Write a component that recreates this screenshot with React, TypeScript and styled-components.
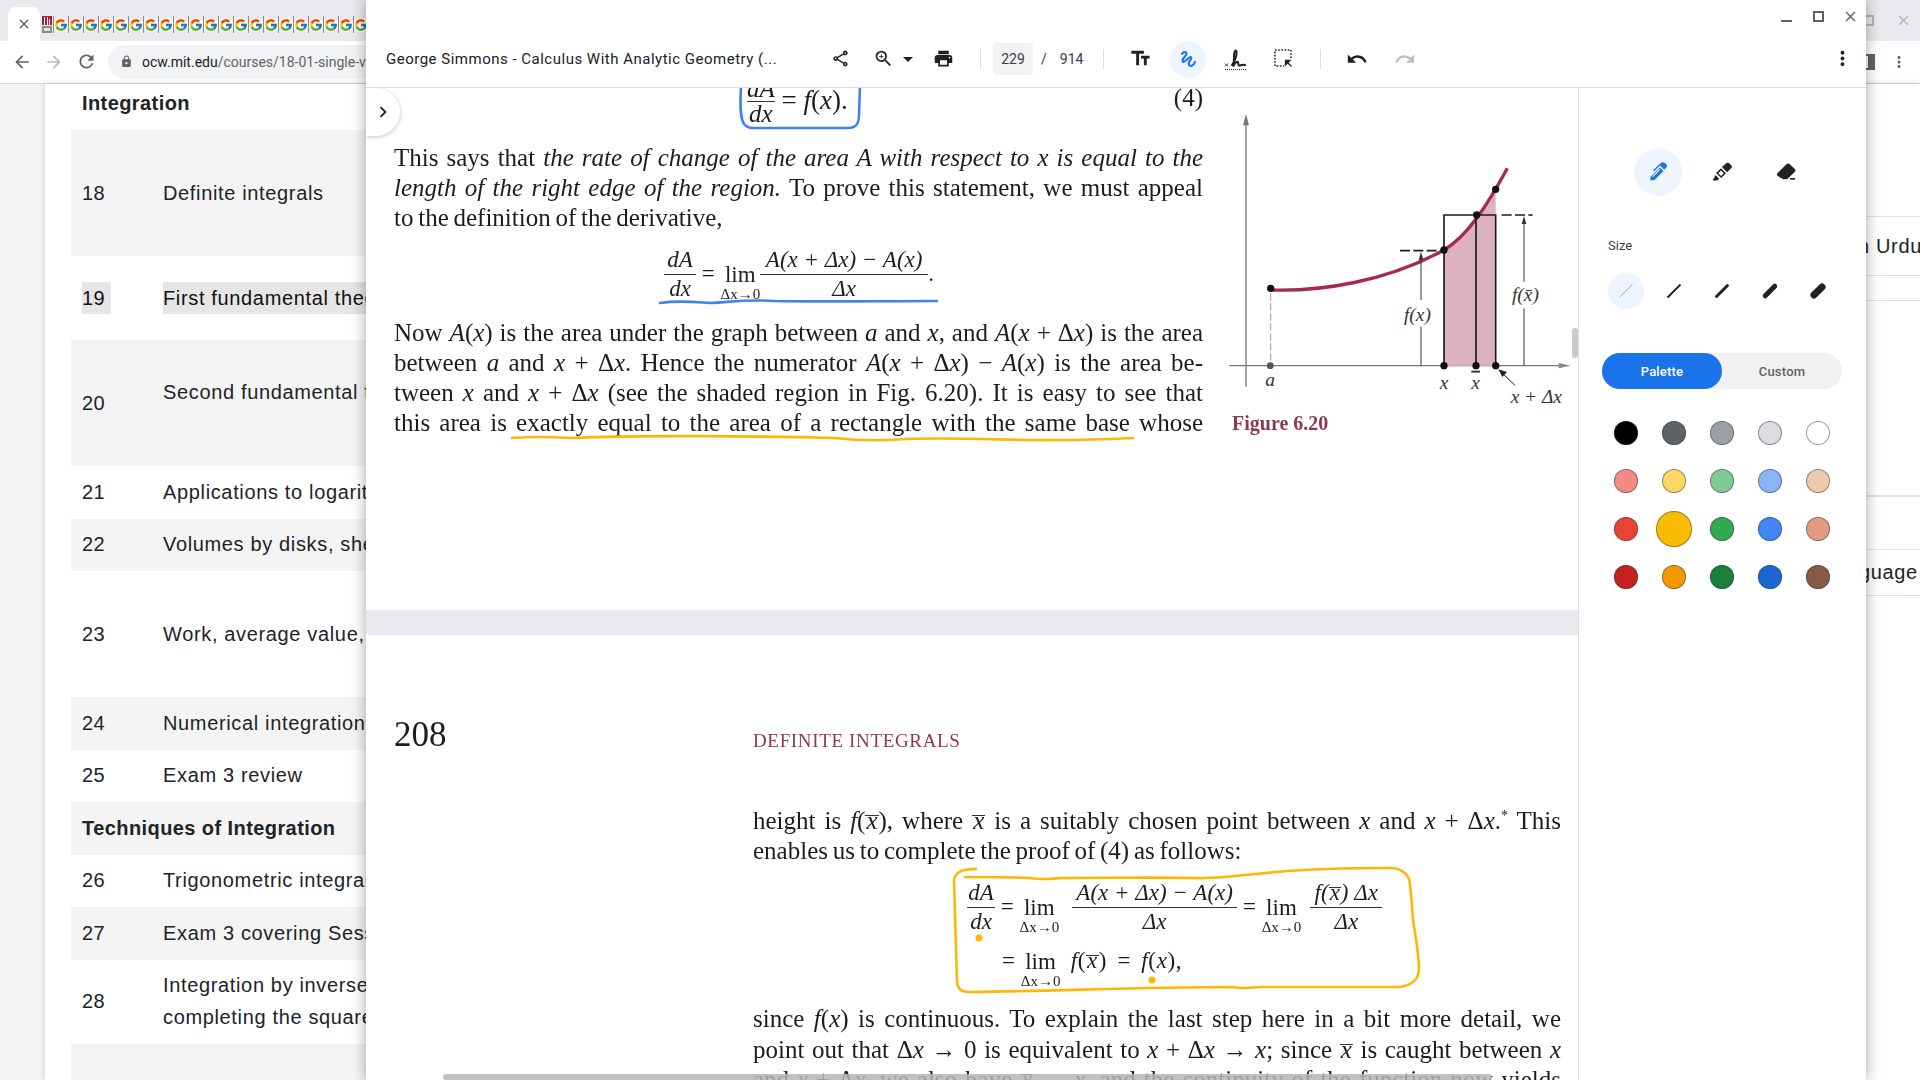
import React from "react";
import styled, { createGlobalStyle } from "styled-components";
import { FcGoogle } from "react-icons/fc";
import {
  MdArrowBack,
  MdArrowForward,
  MdRefresh,
  MdLock,
  MdClose,
  MdMoreVert,
  MdOutlineShare,
  MdOutlineZoomIn,
  MdArrowDropDown,
  MdPrint,
  MdOutlineTextFields,
  MdUndo,
  MdRedo,
  MdChevronRight,
} from "react-icons/md";

const GlobalStyle = createGlobalStyle`
  html, body {
    margin: 0;
    padding: 0;
    height: 100%;
    overflow: hidden;
    background: #fff;
  }
  * { box-sizing: border-box; }
`;

const tabCount = 21;

type TableRow = {
  kind?: string;
  num?: string;
  text: string;
  text2?: string;
  h: number;
  shade?: boolean;
  mark?: boolean;
  lift?: number;
  nudge?: number;
};

const rows: TableRow[] = [
  { kind: "head", text: "Integration", h: 46, nudge: 9 },
  { num: "18", text: "Definite integrals", h: 126, shade: true },
  { num: "19", text: "First fundamental theorem of calculus", h: 84, mark: true },
  { num: "20", text: "Second fundamental theorem", h: 126, shade: true, lift: 22 },
  { num: "21", text: "Applications to logarithms and geometry", h: 53, nudge: 2 },
  { num: "22", text: "Volumes by disks, shells", h: 52, shade: true, nudge: 2 },
  { num: "23", text: "Work, average value, probability", h: 126 },
  { num: "24", text: "Numerical integration", h: 53, shade: true, nudge: 2 },
  { num: "25", text: "Exam 3 review", h: 52, nudge: 2 },
  { kind: "head", text: "Techniques of Integration", h: 53, shade: true, nudge: 2 },
  { num: "26", text: "Trigonometric integrals", h: 52, nudge: 2 },
  { num: "27", text: "Exam 3 covering Sessions", h: 53, shade: true, nudge: 2 },
  { num: "28", text: "Integration by inverse substitution;", text2: "completing the square", h: 84, nudge: 2 },
  { num: "", text: "", h: 60, shade: true },
];

const sizes = [1, 2, 3, 5, 7];

const colors = [
  "#000000", "#5f6368", "#9aa0a6", "#dadce0", "#ffffff",
  "#f28b82", "#fdd663", "#81c995", "#8ab4f8", "#eec9ae",
  "#ea4335", "#fbbc04", "#34a853", "#4285f4", "#e19c80",
  "#c5221f", "#f29900", "#188038", "#1967d2", "#885945",
];

function MitIcon() {
  return (
    <svg width="10" height="17" viewBox="0 0 10 17">
      <rect width="10" height="9" fill="#a31f34" />
      <rect x="2" y="1" width="1" height="8" fill="#fff" />
      <rect x="5" y="1" width="1" height="8" fill="#fff" />
      <rect x="7" y="3" width="1" height="6" fill="#fff" />
      <rect y="10" width="10" height="7" fill="#8d8d86" />
      <rect x="2" y="12" width="6" height="3" fill="#e5e5e0" />
    </svg>
  );
}

function SquiggleIcon() {
  return (
    <svg width="24" height="24" viewBox="0 0 24 24" fill="none">
      <path
        d="M6 7C8 4 12 5 10 8C8 11 5 13 7 15C9 16 13 9 15 10C17 12 11 15 13 18C15 20 18 18 19 15"
        stroke="#1a73e8"
        strokeWidth="2.1"
        strokeLinecap="round"
      />
    </svg>
  );
}

function SignIcon() {
  return (
    <svg width="24" height="24" viewBox="0 0 24 24" fill="none">
      <path d="M1 16.5l3 3M4 16.5l-3 3" stroke="#333" strokeWidth="1" />
      <path
        d="M8 18C11 14 13 8 12.5 5C12 2 10 4 10 9C10 13 9.5 18 9 19.5C11 16 13 14 14 15C14.5 17 14 19 16 18.5C18 18 19 17 21 18"
        stroke="#202124"
        strokeWidth="2"
        strokeLinecap="round"
      />
      <path d="M1 22.5H23" stroke="#202124" strokeWidth="1" strokeDasharray="1 1" />
    </svg>
  );
}

function SelectIcon() {
  return (
    <svg width="24" height="24" viewBox="0 0 24 24" fill="none">
      <rect x="3" y="3" width="16" height="16" stroke="#202124" strokeWidth="1.6" strokeDasharray="1.6 1.6" />
      <rect x="12" y="12" width="9" height="9" fill="#fff" />
      <path d="M19.5 19.5l-3.5-3.5M13.5 18v-4.5H18z" fill="#202124" stroke="#202124" strokeWidth="1.3" />
    </svg>
  );
}

function PenIcon() {
  return (
    <svg width="24" height="24" viewBox="0 0 24 24" fill="#1a73e8">
      <path d="M4 20.5l.8-4L14 7.5l3.5 3.5-9 9z" />
      <path d="M11.5 6L15.5 2.5C17 1.8 20 3 20.8 5.2C21.2 6.2 20.8 7.2 20 8L18.3 9.7L14 5.5L8.2 11.2L7 10.2z" />
      <path d="M6.6 16.6L13.9 9.4" stroke="#fff" strokeWidth="1.1" />
    </svg>
  );
}

function HighlighterIcon() {
  return (
    <svg width="24" height="24" viewBox="0 0 24 24" fill="#202124">
      <path d="M12 7L16.5 3C17.5 2.4 18.5 2.6 19.2 3.2L21.4 5.4C22 6.2 22 7.2 21.4 8L17 12.2z" />
      <path d="M6 13L11 8.2L16 13.2L11.2 18z" />
      <path d="M8.3 13.2L11 10.5L13.8 13.3L11.1 16z" fill="#fff" />
      <path d="M5.5 15L9.2 18.8L7.2 20.6H2.7z" />
    </svg>
  );
}

function EraserIcon() {
  return (
    <svg width="24" height="24" viewBox="0 0 24 24" fill="#202124">
      <path d="M3.4 13.2L12.8 4C13.6 3.2 14.8 3.2 15.5 4L20.8 9C21.6 9.8 21.6 11 20.8 11.8L14.5 18L13 19.2H9.2L3.4 15.8C2.8 15.2 2.8 14 3.4 13.2z" />
      <rect x="16" y="18" width="5" height="1.6" />
    </svg>
  );
}

function SizeStroke({ w, active }: { w: number; active: boolean }) {
  const inset = 3.5 + (w > 2 ? w * 0.35 : 0);
  return (
    <svg width="20" height="20" viewBox="0 0 20 20">
      <path
        d={`M${inset} ${20 - inset}L${20 - inset} ${inset}`}
        stroke={active ? "#8ab4f8" : "#202124"}
        strokeWidth={w}
        strokeLinecap={w > 2 ? "round" : "butt"}
      />
    </svg>
  );
}

function Diagram() {
  return (
    <svg width="360" height="310" viewBox="0 0 1080 930" fill="none">
      <path d="M78 60V860" stroke="#777" strokeWidth="4" />
      <path d="M78 42l-9 34h18z" fill="#777" />
      <path d="M28 797H1030" stroke="#777" strokeWidth="4" />
      <path d="M1052 797l-36-8v16z" fill="#888" />
      <path d="M672 450C735 415 790 345 827 268V797H672z" fill="#dcb2c2" />
      <path d="M152 570C300 575 500 545 672 450C740 410 800 320 862 205" stroke="#a52a50" strokeWidth="10" />
      <path d="M672 797V345H827V797M768 345V797" stroke="#1c1c1c" strokeWidth="5" />
      <path d="M152 580V790" stroke="#666" strokeWidth="2" strokeDasharray="22 8" />
      <path d="M540 452H672M845 345H938" stroke="#1c1c1c" strokeWidth="5" strokeDasharray="30 10" />
      <path d="M603 475V600M603 680V797M912 370V545M912 625V797" stroke="#333" strokeWidth="3" />
      <path d="M603 455l-7 24h14zM912 348l-7 24h14z" fill="#333" />
      <path d="M885 856L845 818" stroke="#222" strokeWidth="3" />
      <path d="M835 808l26 8-14 15z" fill="#222" />
      {[
        [152, 565],
        [672, 450],
        [770, 345],
        [827, 268],
        [672, 797],
        [768, 797],
        [827, 797],
      ].map(([cx, cy]) => (
        <circle key={cx + "-" + cy} cx={cx} cy={cy} r="11" fill="#111" />
      ))}
      <circle cx="151" cy="797" r="10" fill="#555" />
      <DiagramText x="136" y="858">a</DiagramText>
      <DiagramText x="659" y="866">x</DiagramText>
      <DiagramText x="754" y="866" textDecoration="overline">x</DiagramText>
      <DiagramText x="872" y="908">x + Δx</DiagramText>
      <DiagramText x="552" y="662">f(x)</DiagramText>
      <DiagramText x="876" y="604">f(x̄)</DiagramText>
    </svg>
  );
}

function InkLayer() {
  return (
    <InkSvg viewBox="366 88 1212 992" width="1212" height="992" fill="none">
      <g stroke="#3f83ee" strokeWidth="2.6" strokeLinecap="round">
        <path d="M741 86C740 105 740 118 744 124C748 129 752 128 765 128L848 128C856 128 859 124 859 115L860 86" />
        <path d="M660 303C680 300 695 302 710 303C730 302 750 299 775 301C820 302 880 301 937 301" />
      </g>
      <g stroke="#fbb804" strokeWidth="2.6" strokeLinecap="round">
        <path d="M512 438C540 436 555 437 570 438C640 435 760 436 835 438C860 441 880 441 905 439C960 437 1020 441 1060 440C1085 440 1110 439 1133 438" />
        <path d="M976 869C960 869 955 873 954 880L957 982C958 990 962 992 970 992C1060 991 1140 987 1233 987C1240 989 1250 988 1260 987L1400 987C1412 985 1419 980 1419 968C1418 940 1412 925 1412 905L1410 885C1410 875 1402 868 1390 868C1350 868 1310 869 1276 872C1250 874 1220 879 1195 878C1150 877 1100 878 1061 878C1050 879 1040 880 1030 878C1010 877 990 877 965 877" />
      </g>
      <circle cx="979" cy="938" r="3.6" fill="#fbb804" />
      <circle cx="1152" cy="980" r="3.6" fill="#fbb804" />
    </InkSvg>
  );
}

function App() {
  return (
    <Desktop>
      <GlobalStyle />
      <Browser>
        <TabStrip>
          <ActiveTab>
            <MdClose size={16} color="#5f6368" />
          </ActiveTab>
          <FaviconTab $first>
            <MitIcon />
          </FaviconTab>
          {Array.from({ length: tabCount }).map((_, i) => (
            <FaviconTab key={i}>
              <GoogleDisc>
                <FcGoogle size={14} />
              </GoogleDisc>
            </FaviconTab>
          ))}
          <TabSpacer />
          <GhostSquare />
          <GhostClose>
            <MdClose size={17} color="#b4b6b9" />
          </GhostClose>
        </TabStrip>
        <NavBar>
          <NavButton>
            <MdArrowBack size={20} color="#5f6368" />
          </NavButton>
          <NavButton>
            <MdArrowForward size={20} color="#b7b9bc" />
          </NavButton>
          <NavButton>
            <MdRefresh size={21} color="#5f6368" />
          </NavButton>
          <Omnibox>
            <MdLock size={13} color="#5f6368" />
            <UrlHost>ocw.mit.edu</UrlHost>
            <UrlPath>/courses/18-01-single-v</UrlPath>
          </Omnibox>
          <NavRight>
            <SidebarStub />
            <MdMoreVert size={18} color="#5f6368" />
          </NavRight>
        </NavBar>
        <Site>
          <Gutter />
          <Sheet>
            <SheetTable>
              {rows.map((r, i) => (
                <Row key={i} $h={r.h} $shade={!!r.shade} $nudge={r.nudge || 0}>
                  {r.kind === "head" ? (
                    <RowHead>{r.text}</RowHead>
                  ) : (
                    <>
                      <RowNum>
                        <Mark $on={!!r.mark}>{r.num}</Mark>
                      </RowNum>
                      <RowText $lift={r.lift || 0}>
                        <Mark $on={!!r.mark}>{r.text}</Mark>
                        {r.text2 && <div>{r.text2}</div>}
                      </RowText>
                    </>
                  )}
                </Row>
              ))}
            </SheetTable>
            <SheetEdge>
              <EdgeRow $h={133} />
              <EdgeRow $h={59}>
                <EdgeText $shift={-8}>n Urdu</EdgeText>
              </EdgeRow>
              <EdgeRow $h={25} />
              <EdgeRow $h={196} $thick />
              <EdgeRow $h={53} />
              <EdgeRow $h={46}>
                <EdgeText $shift={-7}>guage</EdgeText>
              </EdgeRow>
            </SheetEdge>
          </Sheet>
        </Site>
      </Browser>

      <ViewerWindow>
        <ViewerHead>
          <WindowControls>
            <MinimizeGlyph />
            <MaximizeGlyph />
            <WindowClose>
              <MdClose size={17} color="#5f6368" />
            </WindowClose>
          </WindowControls>
          <ViewerToolbar>
            <DocTitle>George Simmons - Calculus With Analytic Geometry (...</DocTitle>
            <ToolButton>
              <MdOutlineShare size={19} color="#202124" />
            </ToolButton>
            <ToolButton $w={38}>
              <MdOutlineZoomIn size={21} color="#202124" />
            </ToolButton>
            <ToolButton $w={12}>
              <MdArrowDropDown size={24} color="#202124" style={{ flexShrink: 0 }} />
            </ToolButton>
            <ToolButton $ml={5}>
              <MdPrint size={21} color="#202124" />
            </ToolButton>
            <ToolDivider $ml={13} />
            <PageBox>229</PageBox>
            <PageSlash>/</PageSlash>
            <PageTotal>914</PageTotal>
            <ToolDivider $ml={20} />
            <ToolButton $ml={12}>
              <MdOutlineTextFields size={23} color="#202124" />
            </ToolButton>
            <ToolButton $active>
              <SquiggleIcon />
            </ToolButton>
            <ToolButton>
              <SignIcon />
            </ToolButton>
            <ToolButton $ml={0}>
              <SelectIcon />
            </ToolButton>
            <ToolDivider $ml={12} />
            <ToolButton $ml={12}>
              <MdUndo size={22} color="#202124" />
            </ToolButton>
            <ToolButton $ml={0}>
              <MdRedo size={22} color="#bdc1c6" />
            </ToolButton>
            <ToolbarSpacer />
            <MdMoreVert size={23} color="#202124" />
          </ViewerToolbar>
        </ViewerHead>

        <ViewerBody>
          <DocArea>
            <UpperPage>
              <TextColumn>
                <TopEquation>
                  <Equation>
                    <Frac>
                      <Num>dA</Num>
                      <Den>dx</Den>
                    </Frac>
                    <TopEquationText>
                      &nbsp;= <i>f</i>(<i>x</i>).
                    </TopEquationText>
                  </Equation>
                  <EquationTag>(4)</EquationTag>
                </TopEquation>
                <Paragraph>
                  <Line>
                    This says that <i>the rate of change of the area A with respect to x is equal to the</i>
                  </Line>
                  <Line>
                    <i>length of the right edge of the region.</i> To prove this statement, we must appeal
                  </Line>
                  <LastLine>to the definition of the derivative,</LastLine>
                </Paragraph>
                <CenteredEquation>
                  <Frac $wide={32}>
                    <Num>dA</Num>
                    <Den>dx</Den>
                  </Frac>
                  <MathText>&nbsp;=&nbsp;</MathText>
                  <Lim>
                    <LimWord>lim</LimWord>
                    <LimSub>Δx→0</LimSub>
                  </Lim>
                  <Frac $wide={168}>
                    <Num>
                      <i>A</i>(<i>x</i> + Δ<i>x</i>) − <i>A</i>(<i>x</i>)
                    </Num>
                    <Den>
                      Δ<i>x</i>
                    </Den>
                  </Frac>
                  <MathText>.</MathText>
                </CenteredEquation>
                <SecondParagraph>
                  <Line>
                    Now <i>A</i>(<i>x</i>) is the area under the graph between <i>a</i> and <i>x</i>, and <i>A</i>(<i>x</i> + Δ<i>x</i>) is the area
                  </Line>
                  <Line>
                    between <i>a</i> and <i>x</i> + Δ<i>x</i>. Hence the numerator <i>A</i>(<i>x</i> + Δ<i>x</i>) − <i>A</i>(<i>x</i>) is the area be-
                  </Line>
                  <Line>
                    tween <i>x</i> and <i>x</i> + Δ<i>x</i> (see the shaded region in Fig. 6.20). It is easy to see that
                  </Line>
                  <Line>this area is exactly equal to the area of a rectangle with the same base whose</Line>
                </SecondParagraph>
              </TextColumn>
              <FigureColumn>
                <Diagram />
                <FigureCaption>Figure 6.20</FigureCaption>
              </FigureColumn>
            </UpperPage>
            <PageGap />
            <LowerPage>
              <PageNumber>208</PageNumber>
              <LowerColumn>
                <RunningHead>DEFINITE INTEGRALS</RunningHead>
                <LeadParagraph>
                  <Line>
                    height is <i>f</i>(<Bar>x</Bar>), where <Bar>x</Bar> is a suitably chosen point between <i>x</i> and <i>x</i> + Δ<i>x</i>.<Sup>*</Sup> This
                  </Line>
                  <LastLine>enables us to complete the proof of (4) as follows:</LastLine>
                </LeadParagraph>
                <ProofBlock>
                  <ProofRow>
                    <Frac $wide={28}>
                      <Num>dA</Num>
                      <Den>dx</Den>
                    </Frac>
                    <MathText>&nbsp;=&nbsp;</MathText>
                    <Lim>
                      <LimWord>lim</LimWord>
                      <LimSub>Δx→0</LimSub>
                    </Lim>
                    <Frac $ml={13} $wide={165}>
                      <Num>
                        <i>A</i>(<i>x</i> + Δ<i>x</i>) − <i>A</i>(<i>x</i>)
                      </Num>
                      <Den>
                        Δ<i>x</i>
                      </Den>
                    </Frac>
                    <MathText>&nbsp;=&nbsp;</MathText>
                    <Lim>
                      <LimWord>lim</LimWord>
                      <LimSub>Δx→0</LimSub>
                    </Lim>
                    <Frac $ml={9} $wide={72}>
                      <Num>
                        <i>f</i>(<Bar>x</Bar>) Δ<i>x</i>
                      </Num>
                      <Den>
                        Δ<i>x</i>
                      </Den>
                    </Frac>
                  </ProofRow>
                  <ProofRowIndented>
                    <MathText>=&nbsp;</MathText>
                    <Lim>
                      <LimWord>lim</LimWord>
                      <LimSub>Δx→0</LimSub>
                    </Lim>
                    <WideMathText>
                      &nbsp;<i>f</i>(<Bar>x</Bar>) = <i>f</i>(<i>x</i>),
                    </WideMathText>
                  </ProofRowIndented>
                </ProofBlock>
                <Paragraph>
                  <Line>
                    since <i>f</i>(<i>x</i>) is continuous. To explain the last step here in a bit more detail, we
                  </Line>
                  <Line>
                    point out that Δ<i>x</i> → 0 is equivalent to <i>x</i> + Δ<i>x</i> → <i>x</i>; since <Bar>x</Bar> is caught between <i>x</i>
                  </Line>
                  <Line>
                    and <i>x</i> + Δ<i>x</i>, we also have <Bar>x</Bar> → <i>x</i>, and the continuity of the function now yields
                  </Line>
                </Paragraph>
              </LowerColumn>
            </LowerPage>
            <InkLayer />
            <DrawerButton>
              <MdChevronRight size={22} color="#202124" />
            </DrawerButton>
            <VerticalThumb />
            <HorizontalThumb />
          </DocArea>

          <SidePanel>
            <PenTools>
              <PenTool $active>
                <PenIcon />
              </PenTool>
              <PenTool>
                <HighlighterIcon />
              </PenTool>
              <PenTool>
                <EraserIcon />
              </PenTool>
            </PenTools>
            <SizeLabel>Size</SizeLabel>
            <SizeRow>
              {sizes.map((w, i) => (
                <SizeButton key={w} $active={i === 0}>
                  <SizeStroke w={w} active={i === 0} />
                </SizeButton>
              ))}
            </SizeRow>
            <Toggle>
              <ToggleOn>Palette</ToggleOn>
              <ToggleOff>Custom</ToggleOff>
            </Toggle>
            <Swatches>
              {colors.map((c) => (
                <SwatchCell key={c}>
                  <Swatch $color={c} $selected={c === "#fbbc04"} />
                </SwatchCell>
              ))}
            </Swatches>
          </SidePanel>
        </ViewerBody>
      </ViewerWindow>
    </Desktop>
  );
}

export default App;

const Desktop = styled.div`
  position: relative;
  width: 1920px;
  height: 1080px;
  overflow: hidden;
`;

const DiagramText = styled.text`
  font-family: "Liberation Serif", serif;
  font-style: italic;
  font-size: 58px;
  fill: #333;
`;

const InkSvg = styled.svg`
  position: absolute;
  left: 0;
  top: 0;
  pointer-events: none;
`;

const Browser = styled.div`
  width: 1920px;
  height: 1080px;
  display: flex;
  flex-direction: column;
  font-family: "Liberation Sans", Arial, sans-serif;
`;

const TabStrip = styled.div`
  height: 41px;
  background: #e8eaed;
  display: flex;
  align-items: flex-end;
  padding-left: 8px;
`;

const ActiveTab = styled.div`
  width: 32px;
  height: 34px;
  background: #fff;
  border-radius: 8px 8px 0 0;
  display: flex;
  align-items: center;
  justify-content: center;
`;

const FaviconTab = styled.div<{ $first?: boolean }>`
  width: ${(p) => (p.$first ? "14px" : "15px")};
  height: 17px;
  margin-bottom: 8px;
  display: flex;
  align-items: center;
  justify-content: center;
  border-right: 1px solid #8a8d91;
`;

const GoogleDisc = styled.div`
  width: 14px;
  height: 14px;
  border-radius: 50%;
  background: #fff;
  display: flex;
  align-items: center;
  justify-content: center;
`;

const TabSpacer = styled.div`
  flex: 1;
`;

const GhostSquare = styled.div`
  width: 11px;
  height: 11px;
  border: 2px solid #b4b6b9;
  margin: 0 21px 15px 0;
`;

const GhostClose = styled.div`
  width: 17px;
  height: 17px;
  margin: 0 8px 12px 0;
`;

const NavBar = styled.div`
  height: 43px;
  background: #fff;
  border-bottom: 1px solid #dadce0;
  display: flex;
  align-items: center;
  padding: 0 12px 1px 6px;
`;

const NavButton = styled.div`
  width: 32px;
  height: 32px;
  display: flex;
  align-items: center;
  justify-content: center;
`;

const Omnibox = styled.div`
  width: 270px;
  height: 34px;
  margin-left: 6px;
  padding-left: 12px;
  border-radius: 17px 0 0 17px;
  background: #f1f3f4;
  display: flex;
  align-items: center;
  overflow: hidden;
  white-space: nowrap;
  font-family: Roboto, sans-serif;
  font-size: 14px;
`;

const UrlHost = styled.span`
  margin-left: 9px;
  color: #202124;
`;

const UrlPath = styled.span`
  color: #5f6368;
`;

const NavRight = styled.div`
  margin-left: auto;
  display: flex;
  align-items: center;
  gap: 15px;
`;

const SidebarStub = styled.div`
  width: 16px;
  height: 16px;
  border: 2px solid #5f6368;
  border-right-width: 7px;
`;

const Site = styled.div`
  flex: 1;
  display: flex;
  background: #f4f4f4;
  min-height: 0;
`;

const Gutter = styled.div`
  width: 45px;
  flex-shrink: 0;
`;

const Sheet = styled.div`
  flex: 1;
  background: #fff;
  box-shadow: 0 0 6px rgba(0, 0, 0, 0.18);
  display: flex;
  justify-content: space-between;
  overflow: hidden;
`;

const SheetTable = styled.div`
  width: 295px;
  margin-left: 26px;
  flex-shrink: 0;
  overflow: hidden;
`;

const Row = styled.div<{ $h: number; $shade: boolean; $nudge: number }>`
  height: ${(p) => p.$h}px;
  padding: 0 0 ${(p) => p.$nudge}px 11px;
  background: ${(p) => (p.$shade ? "#f4f4f4" : "#fff")};
  display: flex;
  align-items: center;
  font-size: 20px;
  line-height: 32px;
  letter-spacing: 0.65px;
  color: #212326;
  white-space: nowrap;
`;

const RowHead = styled.div`
  font-weight: 700;
  letter-spacing: 0.42px;
`;

const RowNum = styled.div`
  width: 81px;
  flex-shrink: 0;
  letter-spacing: 0.4px;
`;

const RowText = styled.div<{ $lift: number }>`
  margin-bottom: ${(p) => p.$lift}px;
`;

const Mark = styled.span<{ $on: boolean }>`
  display: inline-block;
  background: ${(p) => (p.$on ? "#e6e6e6" : "transparent")};
  color: ${(p) => (p.$on ? "#111" : "inherit")};
  padding-right: ${(p) => (p.$on ? "6px" : "0")};
`;

const SheetEdge = styled.div`
  width: 54px;
  flex-shrink: 0;
  display: flex;
  flex-direction: column;
  overflow: hidden;
`;

const EdgeRow = styled.div<{ $h: number; $thick?: boolean }>`
  height: ${(p) => p.$h}px;
  flex-shrink: 0;
  display: flex;
  align-items: center;
  justify-content: flex-start;
  border-bottom: ${(p) => (p.$thick ? "2px" : "1px")} solid #dfe0e2;
`;

const EdgeText = styled.span<{ $shift: number }>`
  margin-left: ${(p) => p.$shift}px;
  font-size: 20px;
  color: #212326;
  letter-spacing: 0.65px;
  white-space: nowrap;
`;

const ViewerWindow = styled.div`
  position: absolute;
  left: 366px;
  top: 0;
  width: 1500px;
  height: 1080px;
  background: #fff;
  box-shadow: 0 0 14px rgba(0, 0, 0, 0.35);
  display: flex;
  flex-direction: column;
  font-family: Roboto, sans-serif;
  color: #202124;
`;

const ViewerHead = styled.div`
  height: 88px;
  flex-shrink: 0;
  border-bottom: 1px solid #dadce0;
`;

const WindowControls = styled.div`
  height: 32px;
  display: flex;
  align-items: center;
  justify-content: flex-end;
  padding-right: 7px;
`;

const MinimizeGlyph = styled.div`
  width: 11px;
  height: 2px;
  background: #5f6368;
  margin: 9px 21px 0 0;
`;

const MaximizeGlyph = styled.div`
  width: 11px;
  height: 11px;
  border: 2px solid #5f6368;
  margin-right: 18px;
`;

const WindowClose = styled.div`
  display: flex;
  width: 17px;
  height: 17px;
`;

const ViewerToolbar = styled.div`
  height: 53px;
  display: flex;
  align-items: center;
  padding: 0 12px 0 20px;
`;

const DocTitle = styled.div`
  width: 430px;
  flex-shrink: 0;
  font-size: 15px;
  white-space: nowrap;
  letter-spacing: 0.5px;
`;

const ToolButton = styled.div<{ $w?: number; $ml?: number; $active?: boolean }>`
  width: ${(p) => (p.$active ? 36 : p.$w ?? 48)}px;
  height: 36px;
  margin-left: ${(p) => (p.$active ? 6 : p.$ml ?? 0)}px;
  margin-right: ${(p) => (p.$active ? 6 : 0)}px;
  border-radius: 50%;
  background: ${(p) => (p.$active ? "#eff5fe" : "transparent")};
  display: flex;
  align-items: center;
  justify-content: center;
  flex-shrink: 0;
`;

const ToolDivider = styled.div<{ $ml: number }>`
  width: 1px;
  height: 20px;
  background: #dadce0;
  margin-left: ${(p) => p.$ml}px;
  flex-shrink: 0;
`;

const PageBox = styled.div`
  width: 40px;
  height: 32px;
  margin-left: 12px;
  border-radius: 4px;
  background: #f1f3f4;
  display: flex;
  align-items: center;
  justify-content: center;
  font-size: 14px;
  color: #3c4043;
`;

const PageSlash = styled.div`
  margin-left: 8px;
  font-size: 14px;
  color: #3c4043;
`;

const PageTotal = styled.div`
  margin-left: 13px;
  font-size: 14px;
  color: #3c4043;
`;

const ToolbarSpacer = styled.div`
  flex: 1;
`;

const ViewerBody = styled.div`
  flex: 1;
  display: flex;
  min-height: 0;
`;

const DocArea = styled.div`
  position: relative;
  flex: 1;
  min-width: 0;
  overflow: hidden;
  background: #fff;
  font-family: "Liberation Serif", "Times New Roman", serif;
  color: #1c1c1c;
  font-size: 25px;
  line-height: 30.2px;
`;

const UpperPage = styled.div`
  height: 522px;
  padding-left: 28px;
  display: flex;
  gap: 17px;
`;

const TextColumn = styled.div`
  width: 809px;
  flex-shrink: 0;
  filter: blur(0.3px);
`;

const TopEquation = styled.div`
  height: 41px;
  padding-left: 353px;
  display: flex;
  justify-content: space-between;
`;

const EquationTag = styled.span`
  margin-top: -5px;
`;

const Equation = styled.div`
  display: flex;
  align-items: center;
  height: 42px;
  margin-top: -8px;
  line-height: 22px;
`;

const Paragraph = styled.div`
  margin-top: 14px;
  word-spacing: -1.5px;
`;

const SecondParagraph = styled(Paragraph)`
  margin-top: 16px;
`;

const LeadParagraph = styled(Paragraph)`
  margin-top: 52px;
`;

const Line = styled.div`
  white-space: nowrap;
  text-align: justify;
  text-align-last: justify;
`;

const LastLine = styled.div`
  white-space: nowrap;
`;

const CenteredEquation = styled.div`
  margin-top: 13px;
  height: 55px;
  padding-left: 270px;
  display: flex;
  align-items: center;
  font-size: 23px;
  line-height: 26px;
`;

const Frac = styled.div<{ $wide?: number; $ml?: number }>`
  display: flex;
  flex-direction: column;
  align-items: center;
  flex-shrink: 0;
  width: ${(p) => (p.$wide ? p.$wide + "px" : "auto")};
  margin-left: ${(p) => p.$ml ?? 0}px;
`;

const Num = styled.div`
  width: 100%;
  text-align: center;
  font-style: italic;
  white-space: nowrap;
  padding-bottom: 1px;
  border-bottom: 1.5px solid #333;

  i {
    font-style: italic;
  }
`;

const Den = styled.div`
  padding-top: 1px;
  font-style: italic;
  white-space: nowrap;
`;

const MathText = styled.span`
  white-space: pre;
`;

const TopEquationText = styled(MathText)`
  margin-top: -3px;
  font-size: 27px;
`;

const WideMathText = styled(MathText)`
  word-spacing: 4px;
  letter-spacing: 0.6px;
`;

const Lim = styled.div`
  display: flex;
  flex-direction: column;
  align-items: center;
  padding-top: 17px;
  flex-shrink: 0;
`;

const LimWord = styled.div`
  line-height: 22px;
`;

const LimSub = styled.div`
  font-size: 15px;
  line-height: 15px;
  margin-top: 1px;
  white-space: nowrap;
`;

const FigureColumn = styled.div`
  padding-top: 12px;
  width: 358px;
  flex-shrink: 0;
`;

const FigureCaption = styled.div`
  margin-left: 12px;
  margin-top: -7px;
  font-size: 20px;
  line-height: 26px;
  font-weight: 700;
  color: #8b3a54;
  filter: blur(0.3px);
`;

const PageGap = styled.div`
  height: 25px;
  background: #e8eaed;
`;

const LowerPage = styled.div`
  padding-left: 28px;
  display: flex;
`;

const PageNumber = styled.div`
  width: 359px;
  flex-shrink: 0;
  padding-top: 82px;
  font-size: 35px;
  line-height: 36px;
  filter: blur(0.3px);
`;

const LowerColumn = styled.div`
  width: 808px;
  flex-shrink: 0;
  filter: blur(0.3px);
`;

const RunningHead = styled.div`
  margin-top: 93px;
  font-size: 19px;
  line-height: 26px;
  letter-spacing: 0.65px;
  color: #8b3a54;
`;

const Sup = styled.sup`
  font-size: 14px;
  line-height: 0;
`;

const Bar = styled.i`
  display: inline-block;
  line-height: 0.42em;
  padding: 0 1px;
  border-top: 1.5px solid #333;
`;

const ProofBlock = styled.div`
  margin-top: 13px;
  padding-left: 214px;
  height: 111px;
  font-size: 23px;
  line-height: 26px;
`;

const ProofRow = styled.div`
  display: flex;
  align-items: center;
  height: 56px;
`;

const ProofRowIndented = styled(ProofRow)`
  height: 46px;
  margin-top: 3px;
  padding-left: 35px;
`;

const DrawerButton = styled.div`
  position: absolute;
  left: 0;
  top: 0;
  width: 34px;
  height: 48px;
  background: #fff;
  border-radius: 0 24px 24px 0;
  box-shadow: 0 1px 4px rgba(0, 0, 0, 0.25);
  display: flex;
  align-items: center;
  justify-content: center;
`;

const VerticalThumb = styled.div`
  position: absolute;
  right: 0;
  top: 240px;
  width: 6px;
  height: 30px;
  border-radius: 3px;
  background: #c9cacb;
`;

const HorizontalThumb = styled.div`
  position: absolute;
  left: 77px;
  bottom: 0;
  width: 1049px;
  height: 6px;
  border-radius: 3px;
  background: rgba(180, 182, 184, 0.85);
`;

const SidePanel = styled.div`
  width: 288px;
  flex-shrink: 0;
  border-left: 1px solid #dadce0;
  background: #fff;
  padding-left: 24px;
`;

const PenTools = styled.div`
  display: flex;
  gap: 16px;
  padding: 60px 0 0 31px;
`;

const PenTool = styled.div<{ $active?: boolean }>`
  width: 48px;
  height: 48px;
  border-radius: 50%;
  background: ${(p) => (p.$active ? "#eff5fe" : "transparent")};
  display: flex;
  align-items: center;
  justify-content: center;
`;

const SizeLabel = styled.div`
  margin: 41px 0 0 5px;
  font-size: 13px;
  line-height: 18px;
  color: #3c4043;
`;

const SizeRow = styled.div`
  display: flex;
  gap: 12px;
  margin: 18px 0 0 5px;
`;

const SizeButton = styled.div<{ $active: boolean }>`
  width: 36px;
  height: 36px;
  border-radius: 50%;
  background: ${(p) => (p.$active ? "#eff5fe" : "transparent")};
  display: flex;
  align-items: center;
  justify-content: center;
`;

const Toggle = styled.div`
  width: 240px;
  height: 36px;
  margin: 44px 0 0 -1px;
  border-radius: 18px;
  background: #f1f1f1;
  display: flex;
  font-size: 13px;
  font-weight: 500;
  letter-spacing: 0.2px;
`;

const ToggleOn = styled.div`
  width: 120px;
  border-radius: 18px;
  background: #1a73e8;
  color: #fff;
  display: flex;
  align-items: center;
  justify-content: center;
`;

const ToggleOff = styled.div`
  width: 120px;
  color: #5f6368;
  display: flex;
  align-items: center;
  justify-content: center;
`;

const Swatches = styled.div`
  display: grid;
  grid-template-columns: repeat(5, 48px);
  grid-auto-rows: 48px;
  margin: 20px 0 0 -1px;
`;

const SwatchCell = styled.div`
  display: flex;
  align-items: center;
  justify-content: center;
`;

const Swatch = styled.div<{ $color: string; $selected: boolean }>`
  width: ${(p) => (p.$selected ? 36 : 24)}px;
  height: ${(p) => (p.$selected ? 36 : 24)}px;
  border-radius: 50%;
  background: ${(p) => p.$color};
  box-shadow: inset 0 0 0 1px rgba(60, 64, 67, 0.5);
`;
